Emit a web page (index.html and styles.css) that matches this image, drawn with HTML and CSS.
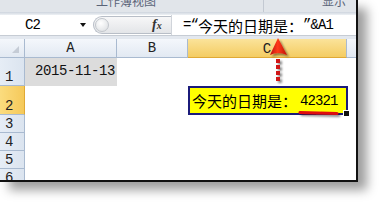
FILE: index.html
```html
<!DOCTYPE html>
<html lang="zh">
<head>
<meta charset="utf-8">
<title>Excel</title>
<link rel="stylesheet" href="styles.css">
</head>
<body>
<div class="window">
  <div class="ribbon">
    <span class="rb-group rb-view">工作簿视图</span>
    <span class="rb-sep"></span>
    <span class="rb-group rb-show">显示</span>
  </div>
  <div class="ribbon-band"></div>
  <div class="fbar">
    <div class="namebox">
      <span class="lat">C2</span>
      <span class="dd"></span>
    </div>
    <div class="capsule">
      <span class="knob"></span>
      <span class="fx"><i>f</i><i class="x">x</i></span>
    </div>
    <div class="formula"><span class="lat">=“</span><span class="cjk">今天的日期是：</span><span class="lat">”&amp;A1</span></div>
  </div>
  <div class="fbar-band"></div>
  <div class="sheet">
    <div class="corner"><span class="tri"></span></div>
    <div class="ch">A</div>
    <div class="ch">B</div>
    <div class="ch sel">C</div>
    <div class="ch last"></div>

    <div class="rh r1">1</div>
    <div class="cell a1"><span class="lat">2015-11-13</span></div>
    <div class="cell"></div>
    <div class="cell"></div>
    <div class="cell"></div>

    <div class="rh r2 sel">2</div>
    <div class="cell"></div>
    <div class="cell"></div>
    <div class="cell c2"><span class="cjk">今天的日期是：</span><span class="lat">42321</span><span class="handle"></span></div>
    <div class="cell"></div>

    <div class="rh">3</div>
    <div class="cell"></div><div class="cell"></div><div class="cell"></div><div class="cell"></div>
    <div class="rh">4</div>
    <div class="cell"></div><div class="cell"></div><div class="cell"></div><div class="cell"></div>
    <div class="rh">5</div>
    <div class="cell"></div><div class="cell"></div><div class="cell"></div><div class="cell"></div>
    <div class="rh">6</div>
    <div class="cell"></div><div class="cell"></div><div class="cell"></div><div class="cell"></div>
  </div>

  <svg class="overlay" width="358" height="182" viewBox="0 0 358 182">
    <defs>
      <linearGradient id="ah" x1="0" y1="0" x2="1" y2="0">
        <stop offset="0" stop-color="#b81010"/>
        <stop offset="0.45" stop-color="#ff3a1a"/>
        <stop offset="1" stop-color="#c01208"/>
      </linearGradient>
      <filter id="sh" x="-50%" y="-50%" width="200%" height="200%">
        <feGaussianBlur in="SourceAlpha" stdDeviation="1.2"/>
        <feOffset dx="2" dy="2" result="b"/>
        <feComponentTransfer><feFuncA type="linear" slope="0.45"/></feComponentTransfer>
        <feMerge><feMergeNode/><feMergeNode in="SourceGraphic"/></feMerge>
      </filter>
    </defs>
    <g filter="url(#sh)">
      <path d="M278 38 L287 55 Q278 51 270 55 Z" fill="url(#ah)"/>
      <rect x="276" y="59" width="4" height="4" fill="#d01818"/>
      <rect x="276" y="65" width="4" height="4" fill="#d01818"/>
      <rect x="276" y="71" width="4" height="4" fill="#d01818"/>
      <rect x="276" y="77" width="4" height="4" fill="#d01818"/>
      <path d="M300 112.5 L337 113.5" stroke="#e01010" stroke-width="3" stroke-linecap="round"/>
    </g>
  </svg>
</div>
</body>
</html>
```

FILE: styles.css
```css
html, body {
  margin: 0;
  padding: 0;
  background: #ffffff;
}
body {
  width: 380px;
  height: 203px;
  overflow: hidden;
  font-family: "Liberation Mono", "Noto Sans CJK SC", monospace;
}
.window {
  position: relative;
  width: 356px;
  height: 180px;
  border-right: 2px solid #111;
  border-bottom: 2px solid #111;
  box-shadow: 9px 8px 10px rgba(0, 0, 0, 0.38);
  background: #fff;
  overflow: hidden;
}
.lat {
  font-family: "Liberation Mono", monospace;
  font-size: 14px;
  letter-spacing: -0.9px;
}
.cjk {
  font-family: "Noto Sans CJK SC", sans-serif;
  font-size: 15px;
}

/* ribbon */
.ribbon {
  height: 12px;
  background: #e1e5ea;
  display: flex;
  align-items: flex-start;
  overflow: hidden;
  color: #5a6478;
  font-family: "Noto Sans CJK SC", sans-serif;
  font-size: 12px;
  line-height: 12px;
}
.rb-group {
  margin-top: -5px;
}
.rb-view {
  margin-left: 96px;
  width: 167px;
}
.rb-sep {
  width: 1px;
  height: 12px;
  background: #c3c9d2;
}
.rb-show {
  margin-left: 58px;
}
.ribbon-band {
  height: 3px;
  background: linear-gradient(#cdd4dd, #eef1f5);
}

/* formula bar */
.fbar {
  height: 21px;
  display: flex;
  background: #fff;
  border-bottom: 1px solid #c6ccd4;
  box-sizing: border-box;
}
.namebox {
  width: 90px;
  display: flex;
  align-items: center;
  padding-left: 25px;
  box-sizing: border-box;
  color: #000;
}
.namebox .lat {
  width: 55px;
}
.dd {
  width: 0;
  height: 0;
  border-left: 3.5px solid transparent;
  border-right: 3.5px solid transparent;
  border-top: 4px solid #111;
}
.capsule {
  width: 78px;
  margin: 1px 0 1px 3px;
  border: 1px solid #b8bec7;
  border-right: none;
  border-radius: 9px 0 0 9px;
  background: linear-gradient(#f7f7f8, #e3e5e8);
  display: flex;
  align-items: center;
  box-sizing: border-box;
}
.knob {
  width: 14px;
  height: 14px;
  margin-left: 1px;
  border-radius: 50%;
  border: 1px solid #c2c6cc;
  background: radial-gradient(circle at 40% 35%, #ffffff, #d9dcdf);
  box-sizing: border-box;
}
.fx {
  margin-left: 43px;
  font-family: "Liberation Serif", serif;
  font-weight: bold;
  font-size: 14px;
  color: #333;
  display: flex;
  align-items: baseline;
}
.fx .x {
  font-size: 10px;
}
.formula {
  flex: 1;
  display: flex;
  align-items: center;
  padding-left: 11px;
  border-left: 1px solid #d0d4da;
  color: #000;
  white-space: nowrap;
}

.fbar-band {
  height: 3px;
  background: #e3e8ef;
}

/* sheet */
.sheet {
  display: grid;
  grid-template-columns: 25px 92px 71px 159px 9px;
  grid-template-rows: 19px 28px 29px 18px 18px 18px 18px;
}
.corner, .ch, .rh {
  background: linear-gradient(#f4f7fb, #e2e9f2);
  border-right: 1px solid #a9bad0;
  border-bottom: 1px solid #a9bad0;
  box-sizing: border-box;
  font-family: "Liberation Mono", monospace;
  font-size: 14px;
  color: #222;
}
.corner {
  position: relative;
}
.tri {
  position: absolute;
  right: 5px;
  bottom: 4px;
  width: 0;
  height: 0;
  border-left: 7px solid transparent;
  border-bottom: 7px solid #c5ccd6;
}
.ch {
  display: flex;
  align-items: center;
  justify-content: center;
}
.ch.sel {
  background: linear-gradient(#fbe39a, #f4cc62);
  border-bottom: 1px solid #e0a935;
  padding-top: 2px;
}
.ch.last {
  border-right: none;
}
.rh {
  display: flex;
  align-items: flex-end;
  padding-left: 5px;
  line-height: 16px;
  background: linear-gradient(90deg, #e6edf6, #dbe4ef);
}
.rh.sel {
  background: linear-gradient(90deg, #fbdc7e, #f5c95a);
  border-right: 1px solid #e0a935;
}
.cell {
  background: #fff;
}
.cell.a1 {
  background: #dcdcdc;
  display: flex;
  align-items: center;
  padding-left: 10px;
  padding-bottom: 2px;
  box-sizing: border-box;
  color: #111;
}
.cell.a1 .lat {
  letter-spacing: -0.4px;
}
.cell.c2 {
  position: relative;
  background: #ffff00;
  border: 2px solid #1b1b7a;
  box-sizing: border-box;
  margin-right: -1px;
  display: flex;
  align-items: center;
  padding-left: 2px;
  color: #000;
  white-space: nowrap;
}
.cell.c2 .lat {
  margin-left: 3px;
}
.handle {
  position: absolute;
  right: -4px;
  bottom: -4px;
  width: 5px;
  height: 5px;
  background: #111;
  border: 1px solid #fff;
}
.overlay {
  position: absolute;
  left: 0;
  top: 0;
  pointer-events: none;
}
```
